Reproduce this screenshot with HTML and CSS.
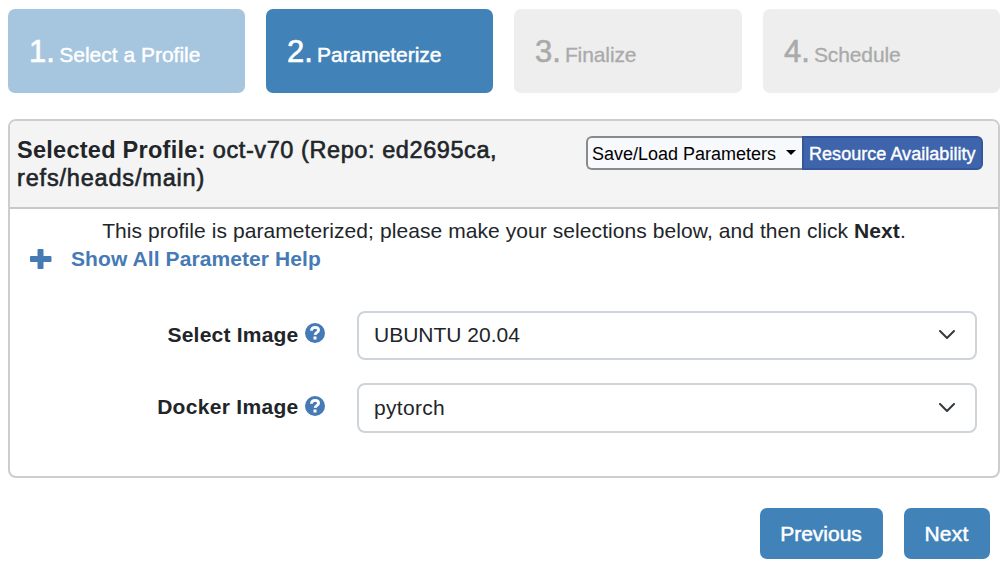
FILE: index.html
```html
<!DOCTYPE html>
<html lang="en">
<head>
<meta charset="utf-8">
<title>Parameterize Profile</title>
<link rel="stylesheet" href="styles.css">
</head>
<body>
<nav class="steps">
  <a class="step step-done"><span class="step-number">1.</span> Select a Profile</a>
  <a class="step step-current"><span class="step-number">2.</span> Parameterize</a>
  <a class="step step-disabled"><span class="step-number">3.</span> Finalize</a>
  <a class="step step-disabled"><span class="step-number">4.</span> Schedule</a>
</nav>
<main class="card">
  <header class="card-header">
    <h1 class="profile-title"><b>Selected Profile:</b> oct-v70 (Repo: ed2695ca,<br><span class="profile-ref">refs/heads/main)</span></h1>
    <div class="btn-group">
      <button class="btn-small btn-light"><span class="save-label">Save/Load Parameters</span><span class="caret"></span></button>
      <button class="btn-small btn-resource">Resource Availability</button>
    </div>
  </header>
  <div class="card-body">
    <p class="intro">This profile is parameterized; please make your selections below, and then click <b>Next</b>.</p>
    <a class="help-toggle">
      <svg class="plus" viewBox="0 0 22 20"><path d="M8.500 0h4q1 0 1 1v6h7q1 0 1 1v4q0 1-1 1h-7v6q0 1-1 1h-4q-1 0-1-1v-6h-6.500q-1 0-1-1v-4q0-1 1-1h6.500v-6q0-1 1-1z"/></svg>
      <span>Show All Parameter Help</span>
    </a>
    <div class="form">
      <label class="label"><span>Select Image</span>
        <svg class="question" viewBox="0 0 20 20"><circle class="disc" cx="10" cy="10" r="10"/><path class="hook" d="M6.400 7.800C6.500 5.300 8 4.300 10.100 4.300C12.300 4.300 13.600 5.500 13.600 7.200C13.600 9.300 10.300 9.400 10.100 11.900"/><path class="dot" d="M8.500 13.500h3v3h-3z"/></svg>
      </label>
      <div class="select"><span>UBUNTU 20.04</span><svg class="chevron" viewBox="0 0 16 10"><path d="M1 1l7 7 7-7"/></svg></div>
      <label class="label label-docker"><span>Docker Image</span>
        <svg class="question" viewBox="0 0 20 20"><circle class="disc" cx="10" cy="10" r="10"/><path class="hook" d="M6.400 7.800C6.500 5.300 8 4.300 10.100 4.300C12.300 4.300 13.600 5.500 13.600 7.200C13.600 9.300 10.300 9.400 10.100 11.900"/><path class="dot" d="M8.500 13.500h3v3h-3z"/></svg>
      </label>
      <div class="select"><span class="docker-value">pytorch</span><svg class="chevron" viewBox="0 0 16 10"><path d="M1 1l7 7 7-7"/></svg></div>
    </div>
  </div>
</main>
<footer class="actions">
  <button class="btn">Previous</button>
  <button class="btn btn-next">Next</button>
</footer>
</body>
</html>
```
FILE: styles.css
```css
* { box-sizing: border-box; }
body {
  margin: 0;
  padding: 9px 8px 0;
  height: 570px;
  overflow: hidden;
  background: #fff;
  color: #212529;
  font: 21px/28px "Liberation Sans", Arial, sans-serif;
}
button { font-family: inherit; margin: 0; white-space: nowrap; }
.steps {
  display: grid;
  grid-template-columns: 237px 227px 228px 237px;
  column-gap: 21px;
}
.step {
  height: 84px;
  padding: 27px 0 0 21px;
  border-radius: 7px;
  line-height: 32px;
  white-space: nowrap;
}
.step-number { font-size: 31px; margin-right: -1.500px; -webkit-text-stroke-width: .6px; }
.step-done { background: #a6c6e0; color: #fff; -webkit-text-stroke: .4px; }
.step-current { background: #4182b8; color: #fff; -webkit-text-stroke: .5px; letter-spacing: -.05px; }
.step-disabled { background: #eee; color: #aaa; -webkit-text-stroke: .3px; letter-spacing: -.1px; }
.card {
  height: 359px;
  margin-top: 26px;
  border: 2px solid #cdcdce;
  border-radius: 8px;
  overflow: hidden;
}
.card-header {
  display: flex;
  justify-content: space-between;
  height: 88px;
  padding: 15px 15px 0 7px;
  background: #f4f4f4;
  border-bottom: 2px solid #c8c8c8;
}
.profile-title {
  margin: 0;
  font-size: 23.500px;
  font-weight: 400;
  line-height: 28px;
  letter-spacing: .58px;
  white-space: nowrap;
  -webkit-text-stroke: .6px;
}
.profile-title b { letter-spacing: .27px; -webkit-text-stroke: 0; }
.profile-ref { letter-spacing: .82px; }
.btn-group { display: flex; height: 34px; }
.btn-small {
  display: flex;
  align-items: center;
  height: 34px;
  padding: 1px 0 0 4px;
  border: 2px solid;
  font-size: 18px;
  line-height: 24px;
}
.btn-light {
  width: 216px;
  background: #f8f9fc;
  border-color: #898a8c;
  border-right: 0;
  border-radius: 6px 0 0 6px;
  color: #000;
}
.btn-resource {
  width: 181px;
  padding-left: 5px;
  background: #3e64ab;
  border-color: #35579a;
  border-radius: 0 6px 6px 0;
  color: #fff;
  letter-spacing: .04px;
  -webkit-text-stroke: .4px;
}
.caret {
  margin: -3px 0 0 10px;
  border: 5.500px solid transparent;
  border-top-color: #000;
  border-bottom: 0;
}
.card-body { padding-top: 8px; }
.intro { margin: 0; text-align: center; white-space: nowrap; letter-spacing: .075px; }
.help-toggle {
  display: flex;
  align-items: center;
  gap: 19px;
  padding-left: 20px;
  color: #467ab5;
  font-weight: 700;
  letter-spacing: .09px;
}
.plus { width: 22px; height: 20px; margin-top: -1px; fill: #467ab5; }
.form {
  display: grid;
  grid-template-columns: 315px 620px;
  grid-template-rows: 49px 50px;
  column-gap: 32px;
  row-gap: 23px;
  margin-top: 38px;
}
.label {
  display: flex;
  justify-content: flex-end;
  align-items: center;
  gap: 6px;
  padding-bottom: 1px;
  font-weight: 700;
  letter-spacing: .22px;
  white-space: nowrap;
}
.label-docker { padding-bottom: 3px; letter-spacing: .3px; }
.question { width: 20px; height: 20px; margin: -4px .5px 0 0; }
.label-docker .question { margin-top: -2px; }
.disc { fill: #467ab5; }
.hook { fill: none; stroke: #fff; stroke-width: 2.800; }
.dot { fill: #fff; }
.select {
  display: flex;
  justify-content: space-between;
  align-items: center;
  padding: 0 20px 1px 15px;
  border: 2px solid #ced4da;
  border-radius: 8px;
}
.docker-value { letter-spacing: .3px; }
.chevron { width: 16px; height: 10px; fill: none; stroke: #343a40; stroke-width: 2; stroke-linecap: round; stroke-linejoin: round; }
.actions {
  display: flex;
  justify-content: flex-end;
  gap: 21px;
  margin-top: 30px;
  padding-right: 10px;
}
.btn {
  width: 123px;
  height: 51px;
  padding: 0 1px 0 0;
  border: 0;
  border-radius: 7px;
  background: #4182b8;
  color: #fff;
  font-size: 21px;
  line-height: 28px;
  -webkit-text-stroke: .5px;
}
.btn-next { width: 86px; letter-spacing: .2px; }
```
